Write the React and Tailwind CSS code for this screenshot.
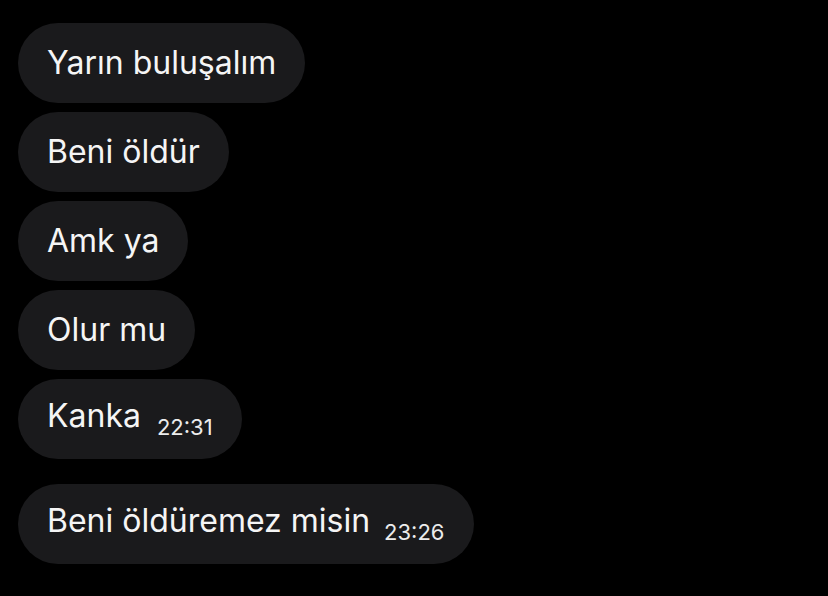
export default function App() {
  const msgs = [
    { t: "Yarın buluşalım" },
    { t: "Beni öldür" },
    { t: "Amk ya" },
    { t: "Olur mu" },
    { t: "Kanka", time: "22:31" },
  ];
  const bubble =
    "h-[80px] rounded-full bg-[#1a1a1c] px-[29px] flex items-center text-[32px] leading-none text-[#f5f5f5] whitespace-nowrap";
  return (
    <div
      className="w-[828px] h-[596px] bg-black overflow-hidden pt-[23px] pl-[18px] flex flex-col items-start gap-[9px]"
      style={{ fontFamily: "Inter, 'Noto Sans', sans-serif" }}
    >
      {msgs.map((m, i) => (
        <div key={i} className={bubble}>
          <span>
            {m.t}
            {m.time && (
              <span className="ml-[16px] text-[22px] align-[-8px] text-[#ececec]">{m.time}</span>
            )}
          </span>
        </div>
      ))}
      <div className={bubble + " mt-[16px]"}>
        <span>
          Beni öldüremez misin
          <span className="ml-[14px] text-[22px] align-[-8px] text-[#ececec]">23:26</span>
        </span>
      </div>
    </div>
  );
}
